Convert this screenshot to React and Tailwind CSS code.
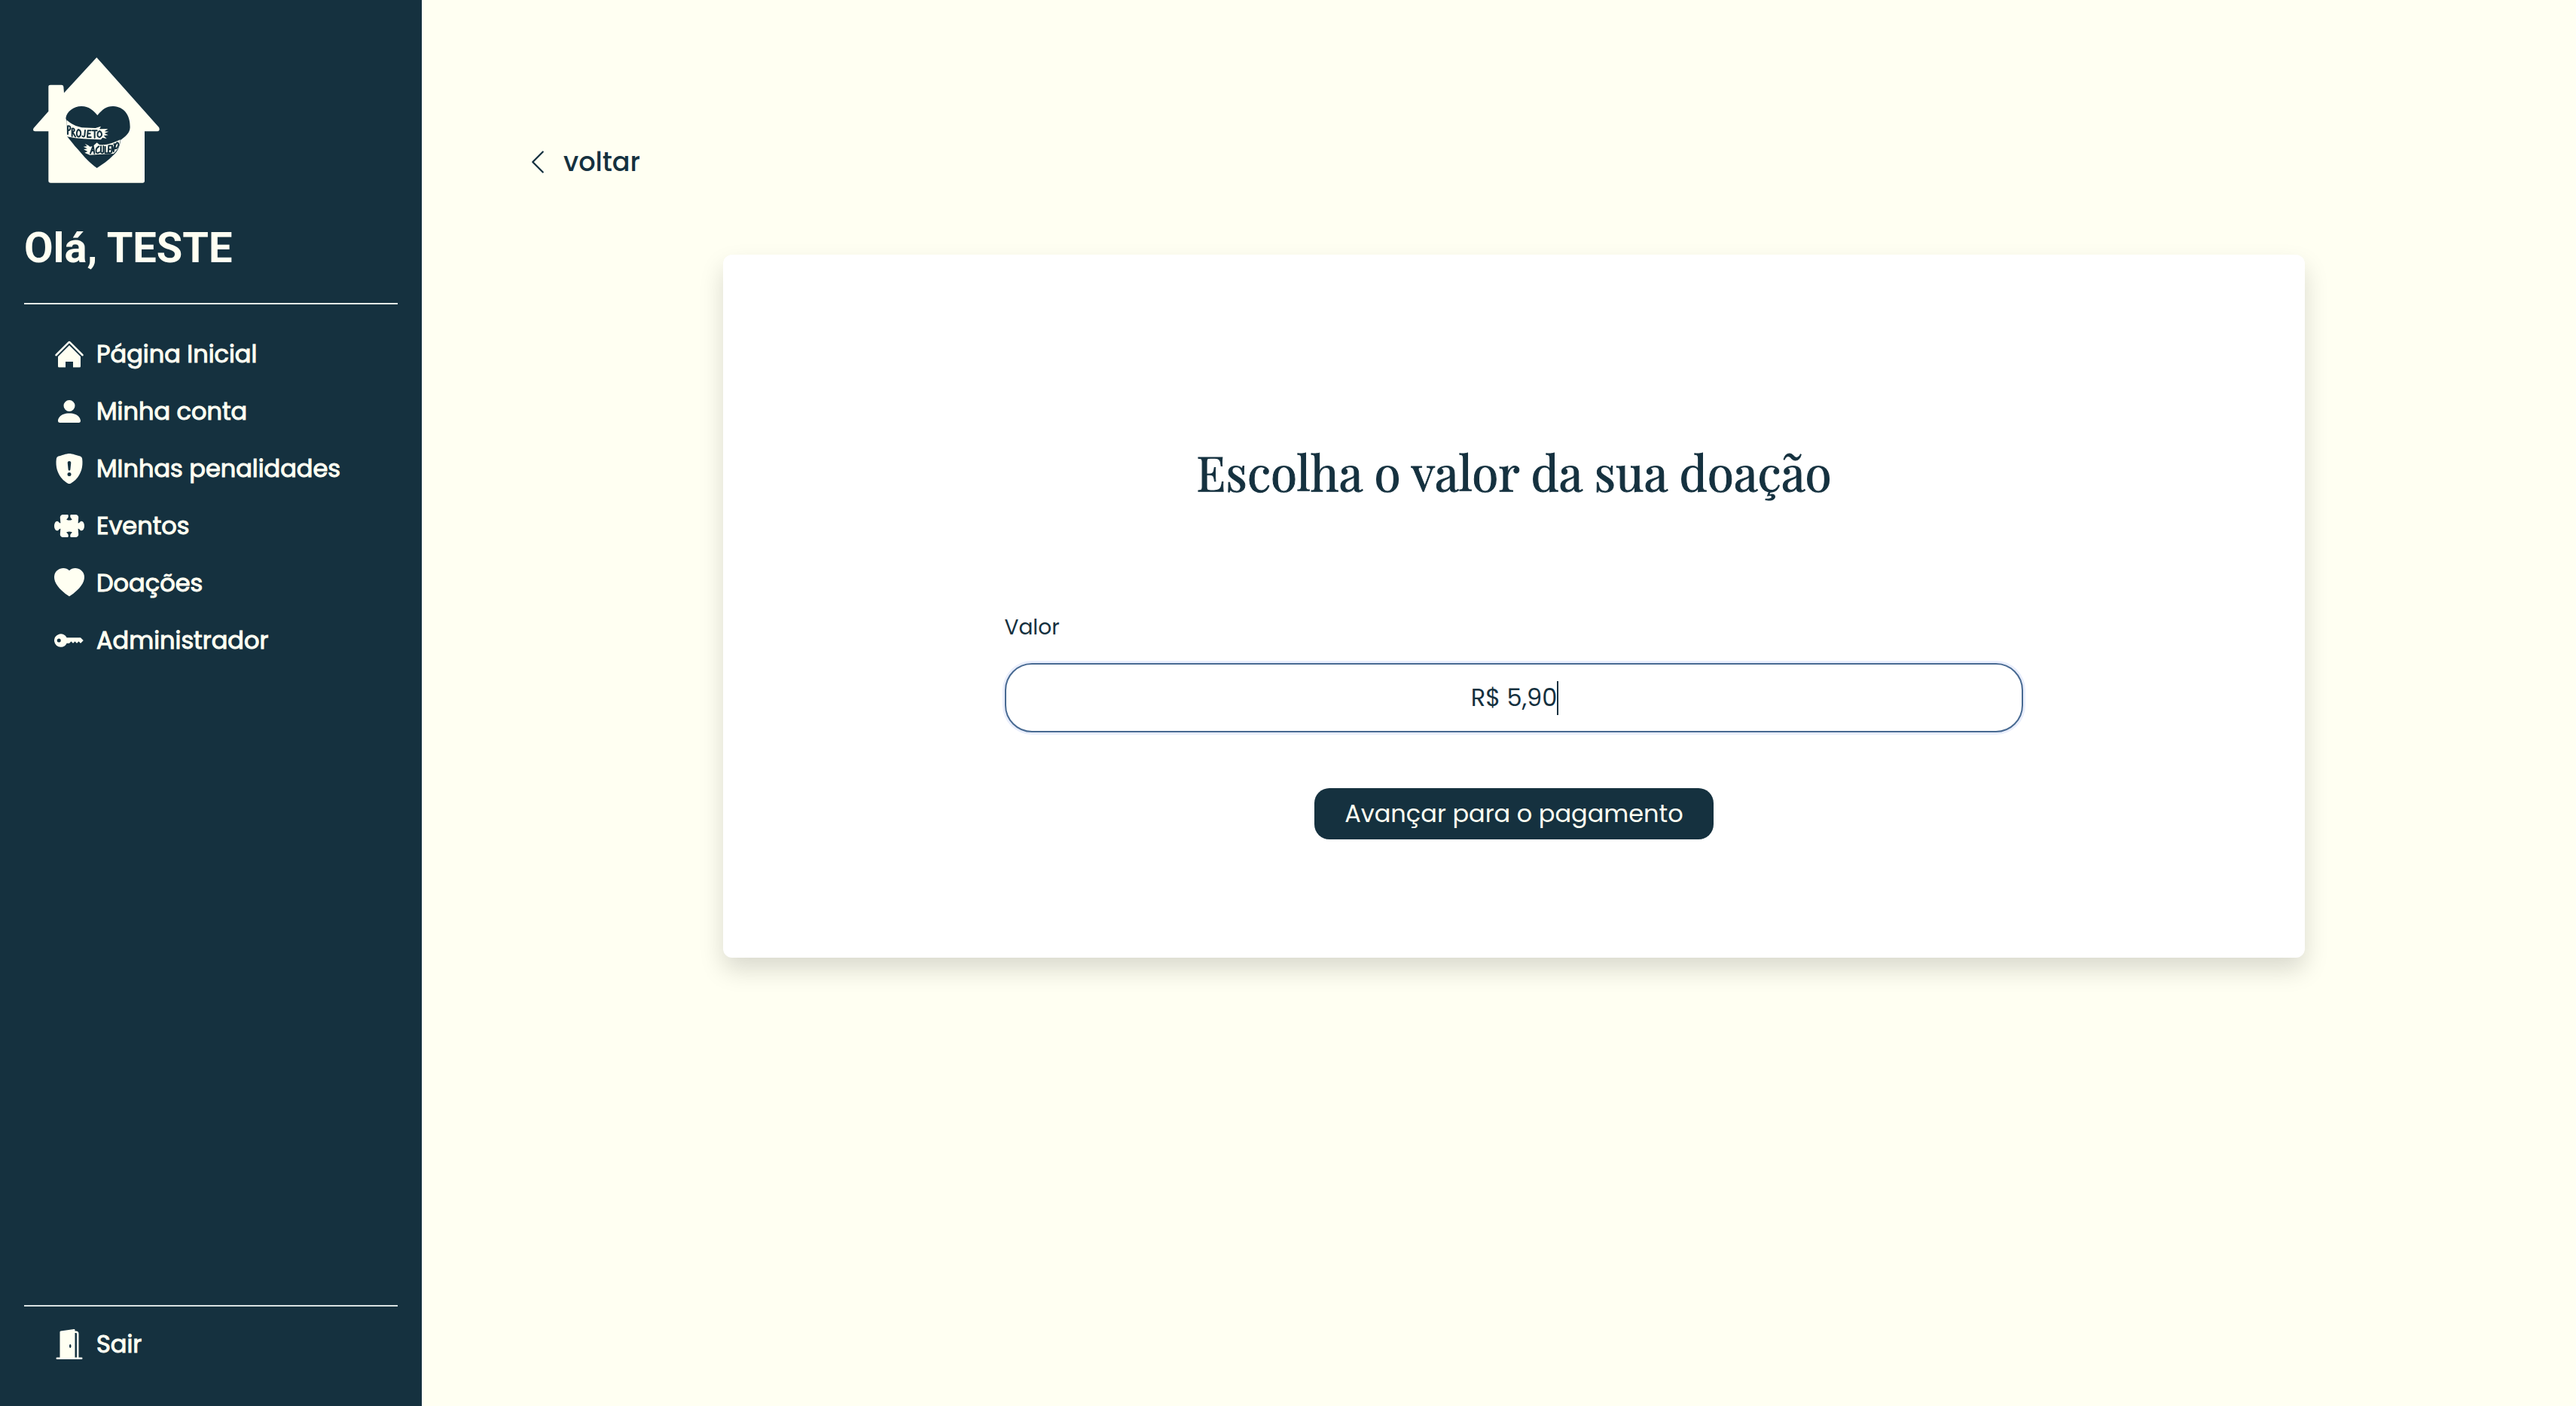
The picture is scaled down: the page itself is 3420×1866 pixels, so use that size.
import { BsChevronLeft, BsDoorOpenFill, BsHeartFill, BsKeyFill, BsPuzzleFill, BsShieldFillExclamation } from "react-icons/bs";

function HouseIcon(props) {
  return (
    <svg viewBox="0 0 16 16" fill="currentColor" aria-hidden="true" {...props}>
      <path d="M8 3.3l6 6v5.2a.5.5 0 0 1-.5.5H10v-3H6v3H2.500a.5.5 0 0 1-.5-.5V9.300z" />
      <path d="M7.293 1.500a1 1 0 0 1 1.414 0l6.647 6.646a.5.5 0 0 1-.708.708L8 2.207 1.354 8.854a.5.5 0 1 1-.708-.708z" />
    </svg>
  );
}

function PersonIcon(props) {
  return (
    <svg viewBox="0 0 16 16" fill="currentColor" aria-hidden="true" {...props}>
      <path d="M3 14s-1 0-1-1 1-4 6-4 6 3 6 4-1 1-1 1zm5-6a3 3 0 1 0 0-6 3 3 0 0 0 0 6" />
    </svg>
  );
}

function Logo() {
  return (
    <svg viewBox="42 47 504 499" className="h-[167px] w-[168px]" role="img" aria-label="Projeto Aculento">
      <path
        fill="#fffff2"
        d="M295 47L543 325Q549 339 538 341H486V538Q486 546 478 546H112Q103 546 103 538V341H50Q38 340 44 328L103 261V163Q103 156 111 156H155Q162 156 163 163L165 188Z"
      />
      <path
        fill="#15313f"
        d="M298 277C318 253 335 240 362 241C403 243 429 275 428 325C427 350 408 362 390 376C388 400 378 422 362 435C340 458 318 472 296 487C268 468 245 442 223 416C203 394 187 372 177 361L176 302L172 289C175 262 205 240 236 241C263 241 281 256 298 277Z"
      />
      <path
        fill="#fffff2"
        d="M176 296C194 314 214 321 236 326L290 328L312 321L306 332L340 331L326 341L343 342L326 349L341 356L323 358L335 370L318 366L312 374C270 372 222 372 177 362Z"
      />
      <path
        fill="#fffff2"
        d="M248 390L263 398L268 402L280 400L296 386L306 394C334 398 358 388 389 374C388 398 376 420 362 430L300 433L268 435L247 426L259 421L243 413L258 410L242 402L257 400Z"
      />
      <g fill="none" stroke="#15313f" strokeWidth="6" strokeLinecap="round" strokeLinejoin="round">
        <path d="M180 320V352M180 320Q192 318 190 330Q187 338 181 338M197 330V360M197 330Q208 328 206 339L199 344L210 362M222 334Q212 344 217 358Q224 368 231 355Q234 338 222 334M249 337L247 358Q244 366 238 360M272 338H260L258 364H272M259 350H269M278 338H296M287 338V366M306 340Q296 346 299 360Q308 370 315 356Q316 344 306 340" />
        <path d="M270 429L281 399L286 429M274 418H284M304 401Q290 408 293 424Q298 431 306 424M312 401V424Q316 430 322 424V400M329 402V428H337M352 398H343L341 427H350M342 413H349M354 425L357 397L362 422L367 394M364 392H372M376 386Q366 396 369 410Q378 410 382 394Q382 386 376 386" />
      </g>
    </svg>
  );
}

const links = [
  { label: "Página Inicial", Icon: HouseIcon },
  { label: "Minha conta", Icon: PersonIcon },
  { label: "MInhas penalidades", Icon: BsShieldFillExclamation },
  { label: "Eventos", Icon: BsPuzzleFill },
  { label: "Doações", Icon: BsHeartFill },
  { label: "Administrador", Icon: BsKeyFill },
];

function NavItem({ label, Icon }) {
  return (
    <li>
      <a href="#" className="flex h-[76px] items-center gap-4 px-10 text-[32px] leading-[48px]">
        <Icon className="size-10 shrink-0" />
        <span className="[-webkit-text-stroke:1px]">{label}</span>
      </a>
    </li>
  );
}

function Sidebar() {
  return (
    <aside className="flex w-[560px] shrink-0 flex-col bg-[#15313f] px-8 pt-[76px] pb-11 text-[#fffff2]">
      <a href="#" className="ml-3 self-start">
        <Logo />
      </a>
      <p className="mt-[52px] font-['Roboto','Liberation_Sans',sans-serif] text-[56px] leading-[68px] font-bold">Olá, TESTE</p>
      <hr className="mt-[39px] border-t-2 border-[#e4e9e6]" />
      <nav className="mt-7 flex grow flex-col justify-between">
        <ul>
          {links.map((link) => (
            <NavItem key={link.label} {...link} />
          ))}
        </ul>
        <ul className="border-t-2 border-[#d9e2e2] pt-3">
          <NavItem label="Sair" Icon={BsDoorOpenFill} />
        </ul>
      </nav>
    </aside>
  );
}

function DonationForm() {
  return (
    <form className="mx-auto mt-24 w-[74.5%] rounded-xl bg-white pt-[246px] pb-[157px] shadow-[0_16px_32px_rgba(0,0,0,0.15)]">
      <h1 className="text-center font-['Playfair_Display','Noto_Serif','Liberation_Serif',serif] text-[64px] leading-[84px] font-normal [-webkit-text-stroke:1px]">
        Escolha o valor da sua doação
      </h1>
      <div className="mx-auto mt-36 flex w-[64.4%] flex-col items-center">
        <label htmlFor="valor" className="self-start text-[28px] leading-[42px]">
          Valor
        </label>
        <div className="relative mt-[26px] w-full">
          <input
            id="valor"
            type="text"
            defaultValue="R$ 5,90"
            className="h-[92px] w-full rounded-[36px] border-2 border-[#486a92] bg-white text-center text-[32px] ring-[3px] ring-[#e9eefc] outline-none"
          />
          <div aria-hidden="true" className="pointer-events-none absolute inset-0 flex items-center justify-center text-[32px]">
            <span className="invisible">R$ 5,90</span>
            <span className="-mr-0.5 h-[45px] w-0.5 bg-[#15313f]" />
          </div>
        </div>
        <button type="submit" className="mt-[74px] h-[68px] rounded-[20px] bg-[#15313f] px-10 text-[32px] leading-[48px] text-[#fffff2]">
          Avançar para o pagamento
        </button>
      </div>
    </form>
  );
}

export default function App() {
  return (
    <div className="flex min-h-screen bg-[#fffff2] font-['Poppins','Inter',sans-serif] text-[#15313f]">
      <Sidebar />
      <main className="grow pt-[188px] pl-10">
        <a href="#" className="ml-24 inline-flex items-center gap-4 align-top text-[35px] leading-[54px] font-medium">
          <BsChevronLeft className="size-9" />
          voltar
        </a>
        <DonationForm />
      </main>
    </div>
  );
}
